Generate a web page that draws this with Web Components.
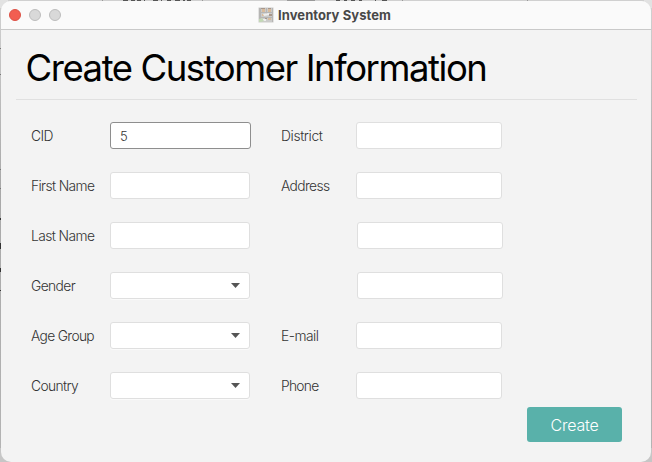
<!DOCTYPE html>
<html lang="en">
<head>
<meta charset="utf-8">
<title>Inventory System</title>
<style>
html,body{margin:0;width:652px;height:462px;overflow:hidden;background:#c9c9c9;font-family:Inter,"Liberation Sans",sans-serif}
</style>
</head>
<body>
<inv-desktop>
  <inv-window>
    <inv-titlebar slot="bar"><fit-text width="113">Inventory System</fit-text></inv-titlebar>
    <inv-heading><fit-text width="461">Create Customer Information</fit-text></inv-heading>
    <inv-form>
      <inv-column slot="left" style="--label:79px;--field:140px">
        <inv-field label="CID" w="22" value="5" focused></inv-field>
        <inv-field label="First Name" w="63.3"></inv-field>
        <inv-field label="Last Name" w="63.3"></inv-field>
        <inv-field label="Gender" w="44" select></inv-field>
        <inv-field label="Age Group" w="63" select></inv-field>
        <inv-field label="Country" w="47" select></inv-field>
      </inv-column>
      <inv-column slot="right" style="--label:75px;--field:146px">
        <inv-field label="District" w="41.5"></inv-field>
        <inv-field label="Address" w="48.5"></inv-field>
        <inv-field style="--label:76px"></inv-field>
        <inv-field style="--label:76px"></inv-field>
        <inv-field label="E-mail" w="37.5"></inv-field>
        <inv-field label="Phone" w="37.5"></inv-field>
      </inv-column>
    </inv-form>
    <inv-button slot="action"><fit-text width="48">Create</fit-text></inv-button>
  </inv-window>
</inv-desktop>
<script>
const define = (name, html, setup) => customElements.define(name, class extends HTMLElement {
  connectedCallback() {
    if (this.shadowRoot) return;
    const t = document.createElement('template');
    t.innerHTML = html;
    this.attachShadow({mode: 'open'}).append(t.content.cloneNode(true));
    if (setup) setup(this, this.shadowRoot);
  }
});

// Tracks its text so that the line takes the width asked for.
define('fit-text', `<style>:host{display:inline-block;white-space:nowrap}</style><slot></slot>`, el => {
  const target = parseFloat(el.getAttribute('width'));
  const fit = () => {
    el.style.letterSpacing = '0';
    const n = el.textContent.length, w = el.getBoundingClientRect().width;
    if (target && n && w) el.style.letterSpacing = ((target - w) / n).toFixed(3) + 'px';
  };
  requestAnimationFrame(fit);
});

define('inv-desktop', `<style>
:host{display:block;position:relative;width:652px;height:462px;background:linear-gradient(#d2d2d2,#a9a9a9 40%,#b4b4b4)}
svg{position:absolute;inset:0}
</style>
<svg width="652" height="462" shape-rendering="crispEdges">
<path fill="#d0d0d0" d="M0 0h652v1H0z"/>
<path fill="#e2e2e2" d="M0 0h8v8H0zM644 0h8v8h-8z"/>
<path fill="#c6c6c6" d="M0 448h14v14H0zM638 448h14v14h-14z"/>
<path fill="#999" d="M102 0h1v1h-1zM202 0h1v1h-1zM287 0h28v1h-28zM402 0h1v1h-1zM527 0h1v1h-1z"/>
<path fill="#777" d="M0 48h1v1H0zM0 74h1v1H0zM0 169h1v1H0zM0 188h1v1H0z"/>
<path fill="#333" d="M0 218h1v2H0zM0 243h1v6H0zM0 268h1v4H0zM0 290h1v1H0z"/>
</svg><slot></slot>
<svg width="652" height="3">
<path fill="#555" d="M123 0h5v1h-5zM131 0h4v1h-4zM137 0h4v1h-4zM144 0h1v1h-1zM153 0h5v1h-5zM161 0h1v1h-1zM167 0h4v1h-4zM175 0h5v1h-5zM183 0h2v1h-2zM187 0h4v1h-4zM336 0h4v1h-4zM344 0h3v1h-3zM351 0h4v1h-4zM359 0h3v1h-3zM375 0h1v1h-1zM382 0h5v1h-5z"/>
</svg>`);

define('inv-window', `<style>
:host{position:absolute;left:1px;top:1px;width:650px;height:461px;box-sizing:border-box;display:flex;flex-direction:column;background:#f3f3f3;border-radius:10px;overflow:hidden}
footer{display:flex;justify-content:flex-end;padding:0 29px 0 0;margin-top:8px}
</style><slot name="bar"></slot><slot></slot><footer><slot name="action"></slot></footer>`);

define('inv-titlebar', `<style>
:host{display:flex;align-items:center;box-sizing:border-box;height:29px;flex:none;background:#fafafa;border-bottom:1px solid #c9c9c9;font-size:13px;font-weight:700;color:#484848;line-height:16px}
.dots{display:flex;gap:8px;padding-left:8px;width:249px;box-sizing:border-box;flex:none}
i{width:12px;height:12px;box-sizing:border-box;border-radius:50%;background:#d9d9d9;border:1px solid #bcbcbc}
i:first-child{background:#f25e51;border-color:#dc5145}
svg{margin:0 4px 0 8px;flex:none}
::slotted(*){position:relative;top:-.5px}
</style>
<div class="dots"><i></i><i></i><i></i></div>
<svg width="16" height="16" viewBox="0 0 16 16">
<path fill="#cbcbca" d="M.5.5h15v15H.5z"/>
<path fill="#b6b5b4" d="M1 1h2v14H1zM8 1h1v6H8zM14 1h1v14h-1zM3 5h11v1H3zM3 10h11v1H3z"/>
<path fill="#d8bb9c" d="M4 2h3v3H4zM10 2h3v3h-3zM4 7h2v2H4zM10 11h3v2h-3z"/>
<path fill="#a8978b" d="M3 1h4v1H3zM10 1h3v1h-3zM11 7h3v2h-3zM7 11h2v1H7z"/>
<path fill="#eeeeed" d="M5 7l6-1v2L6 9zM5 12h3v2H5z"/>
<path fill="#c3d8b6" d="M1 12l3-1 2 3-3 1H1z"/>
</svg><slot></slot>`);

define('inv-heading', `<style>
:host{display:block;box-sizing:border-box;flex:none;height:70px;margin:0 14px 0 15px;padding:15px 0 0 9.5px;border-bottom:1px solid #e0e0e0;font-size:36.5px;line-height:46px;color:#000}
</style><slot></slot>`);

define('inv-form', `<style>
:host{display:flex;padding:22px 0 0 30px;gap:31px;flex:none}
</style><slot name="left"></slot><slot name="right"></slot>`);

define('inv-column', `<style>:host{display:grid;grid-auto-rows:27px;row-gap:23px}</style><slot></slot>`);

define('inv-field', `<style>
:host{display:flex;align-items:center;height:27px;font-size:13.8px;font-weight:350;color:#333;line-height:18px}
label{width:var(--label);flex:none}
.box{width:var(--field);height:27px;box-sizing:border-box;flex:none;display:flex;align-items:center;border:1px solid #dfdfdf;border-radius:3px;background:#fff;padding:0 9px;font-size:13px}
:host([focused]) .box{border-color:#8e8e8e;width:141px;margin-right:-1px}
:host([select]) .box{justify-content:flex-end;box-shadow:0 1px #fafafa}
</style><label></label><div class="box"></div>`, (el, root) => {
  const text = el.getAttribute('label');
  if (text) {
    const f = document.createElement('fit-text');
    f.setAttribute('width', el.getAttribute('w'));
    f.textContent = text;
    root.querySelector('label').append(f);
  }
  const box = root.querySelector('.box');
  if (el.hasAttribute('value')) box.textContent = el.getAttribute('value');
  if (el.hasAttribute('select')) box.innerHTML = '<svg width="9" height="5" viewBox="0 0 9 5"><path fill="#555" d="M0 0h9L4.5 5z"/></svg>';
});

define('inv-button', `<style>
:host{display:flex;align-items:center;justify-content:center;width:95px;height:35px;background:#59b1aa;border-radius:3px;color:#fff;font-size:16px;font-weight:350;line-height:20px}
</style><slot></slot>`);
</script>
</body>
</html>
